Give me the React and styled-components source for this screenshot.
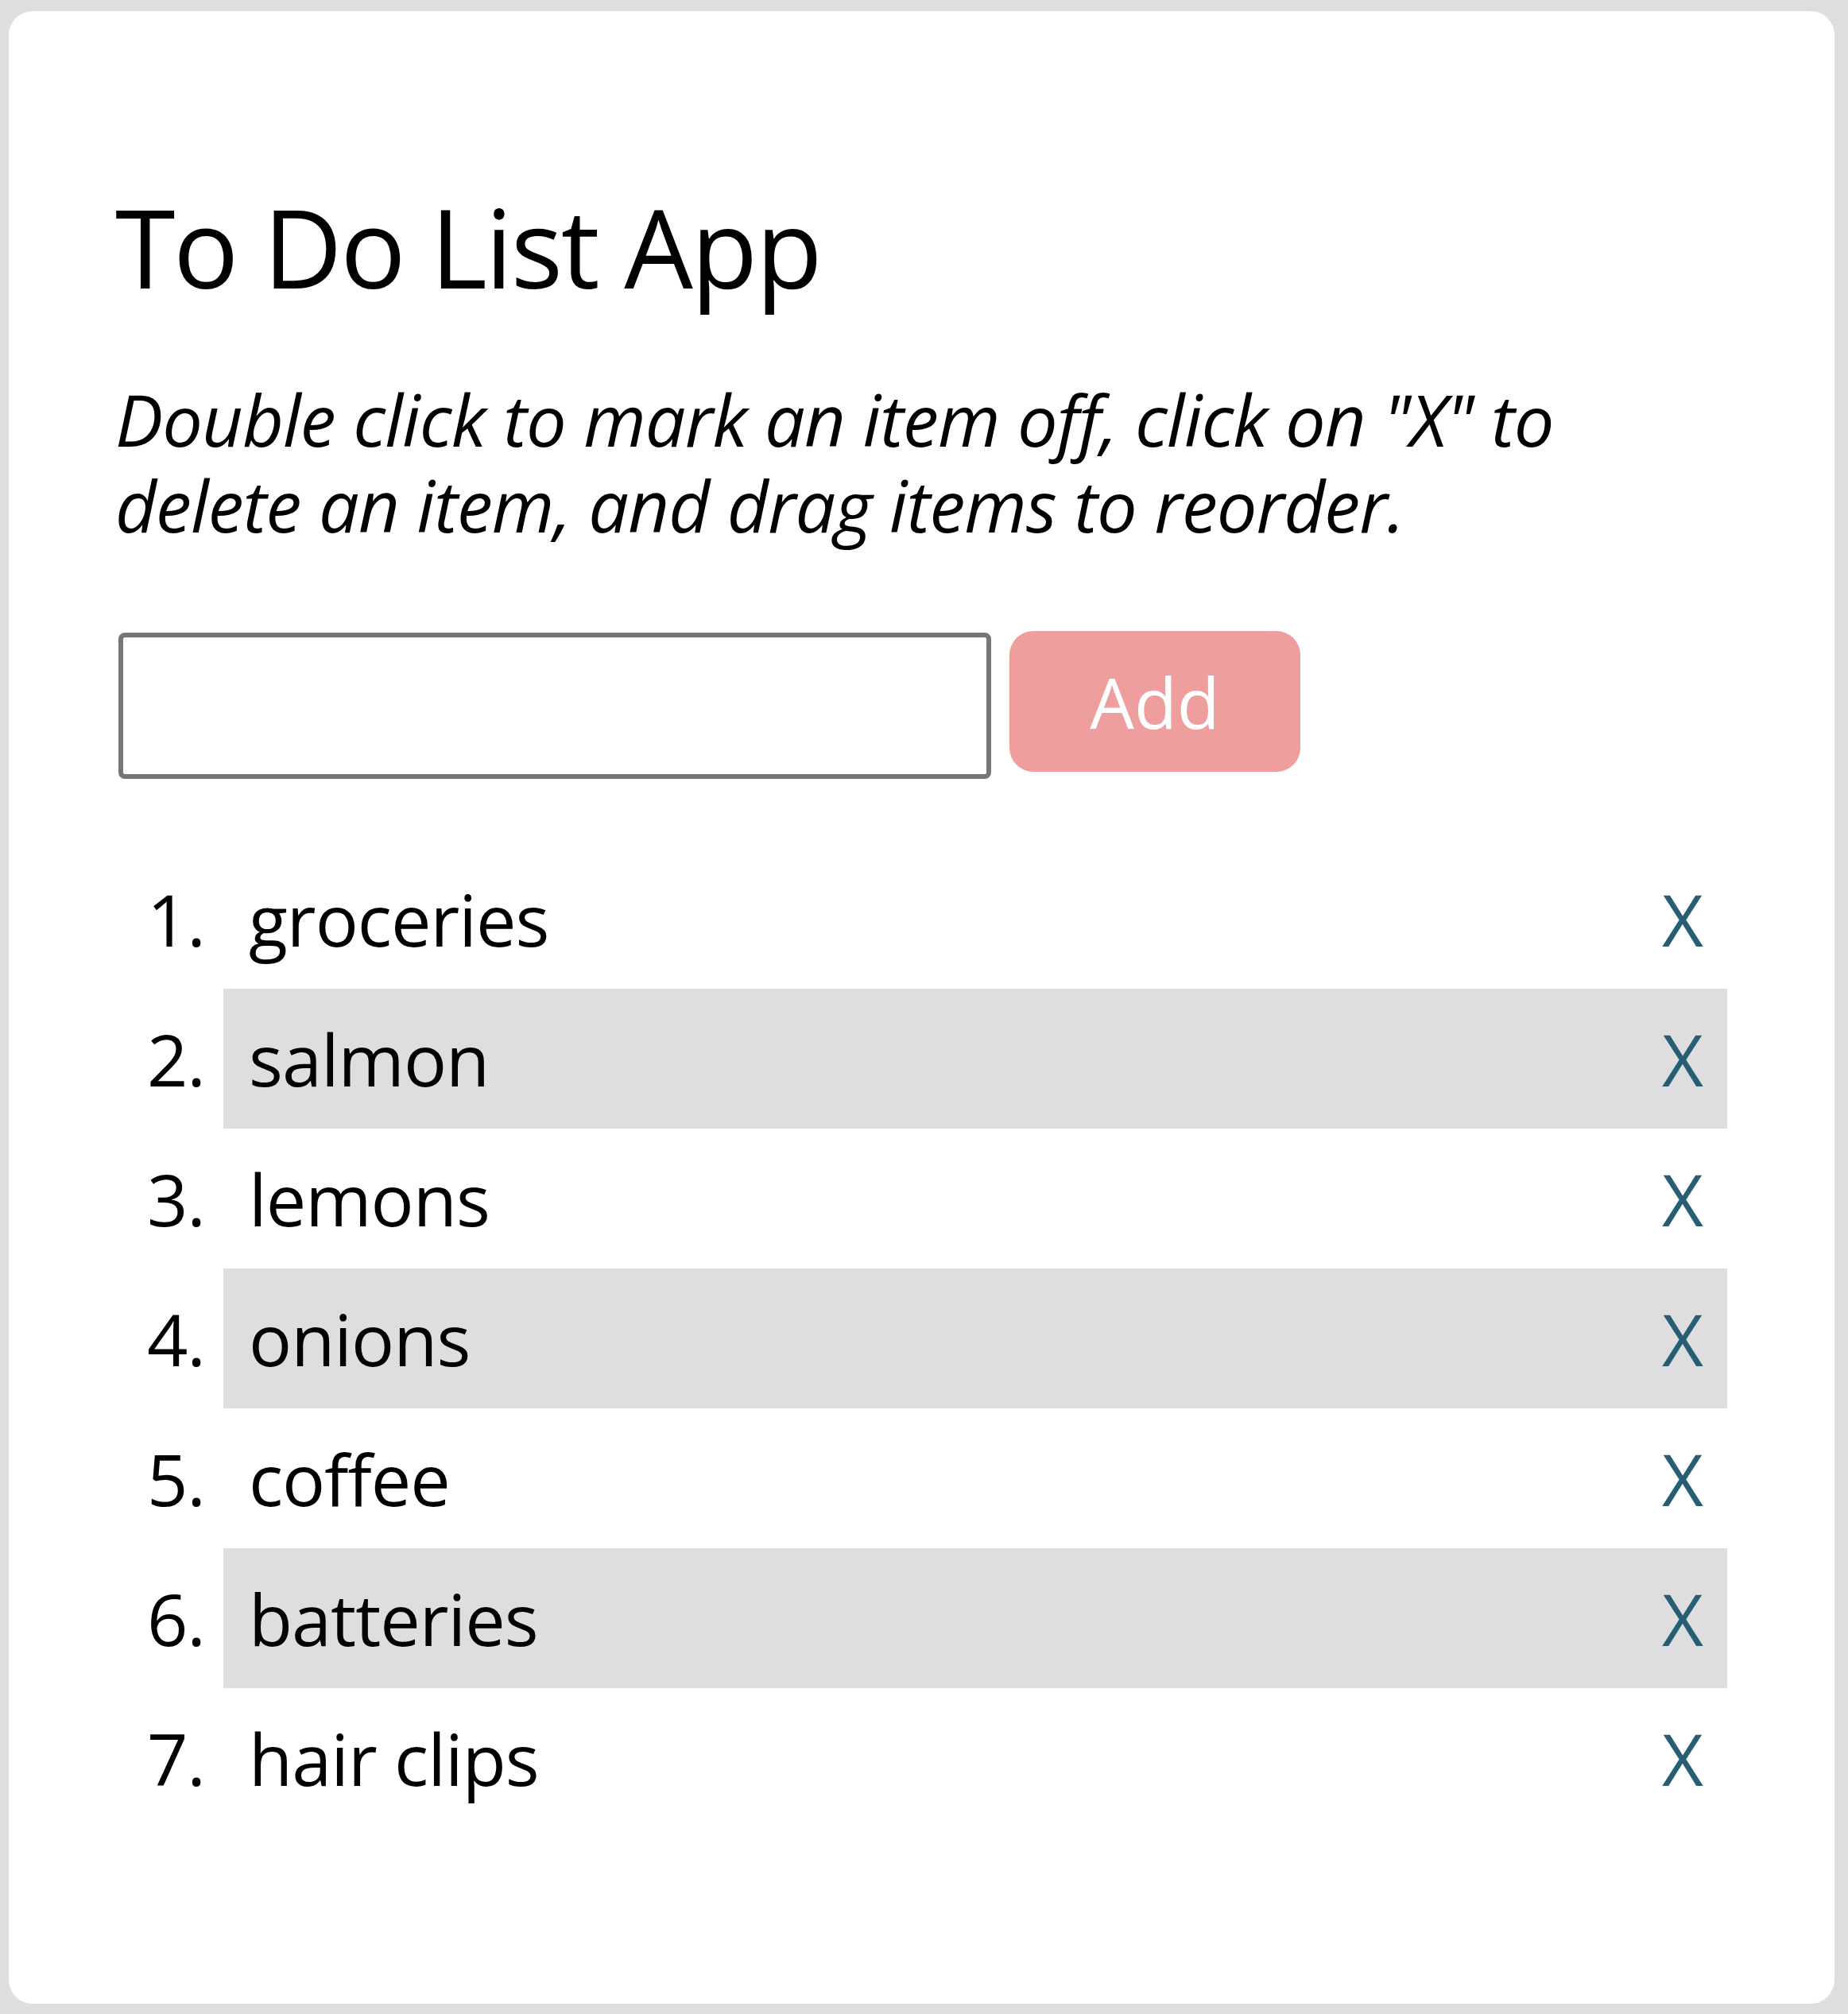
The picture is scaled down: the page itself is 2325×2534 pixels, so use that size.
import React, { useState } from 'react';
import styled, { createGlobalStyle } from 'styled-components';

const initialItems = [
  'groceries',
  'salmon',
  'lemons',
  'onions',
  'coffee',
  'batteries',
  'hair clips',
];

//--------------------------STYLING-------------------------//
const GlobalStyle = createGlobalStyle`
  body {
    margin: 0;
    background-color: #dedede;
    font-family: "Open Sans", "Noto Sans", sans-serif;
    color: #000;
  }
`;

const Page = styled.div`
  padding: 14px 17px 14px 11px;
`;

const Card = styled.div`
  box-sizing: border-box;
  width: 2297px;
  background-color: #fff;
  border-radius: 30px;
  padding: 203px 135px 221px 134px;
`;

const Title = styled.h1`
  margin: 0;
  font-size: 137px;
  font-weight: 400;
  line-height: normal;
  letter-spacing: -2.4px;
`;

const Hint = styled.p`
  margin: 70px 0 0;
  font-size: 90px;
  font-style: italic;
  line-height: 108px;
  letter-spacing: -0.9px;
`;

const AddRow = styled.form`
  display: flex;
  align-items: flex-start;
  gap: 23px;
  margin-top: 105px;
`;

const TextInput = styled.input`
  box-sizing: border-box;
  width: 1098px;
  height: 184px;
  margin: 2px 0 0 4px;
  border: 6px solid #767676;
  border-radius: 8px;
  font-family: inherit;
  font-size: 90px;
  padding: 0 20px;
  outline: none;
`;

const AddButton = styled.button`
  width: 366px;
  height: 177px;
  border: none;
  border-radius: 30px;
  background-color: #ef9e9e;
  color: #fff;
  font-family: inherit;
  font-size: 88px;
  cursor: pointer;
`;

const List = styled.ol`
  list-style: none;
  margin: 88px 0 0;
  padding: 0;
`;

const ListRow = styled.li`
  display: flex;
  align-items: stretch;
  font-size: 90px;
  line-height: normal;
  letter-spacing: -1px;
`;

const Num = styled.span`
  box-sizing: border-box;
  width: 136px;
  flex-shrink: 0;
  padding: 27px 23px 27px 0;
  text-align: right;
`;

const Item = styled.div`
  flex: 1;
  display: flex;
  justify-content: space-between;
  padding: 27px 31px 27px 32px;
  background-color: ${props => (props.striped ? '#dedede' : 'transparent')};
  text-decoration: ${props => (props.done ? 'line-through' : 'none')};
  user-select: none;
`;

const Remove = styled.span`
  color: #275e73;
  cursor: pointer;
`;

//----------------------------- APP --------------------------------//

const App = () => {
  const [items, setItems] = useState(initialItems.map(text => ({ text, done: false })));
  const [value, setValue] = useState('');

  const submitHandler = evt => {
    evt.preventDefault();
    if (!value.trim()) return;
    setItems([...items, { text: value.trim(), done: false }]);
    setValue('');
  };

  const toggle = idx => {
    setItems(items.map((it, i) => (i === idx ? { ...it, done: !it.done } : it)));
  };

  const remove = idx => {
    setItems(items.filter((_, i) => i !== idx));
  };

  return (
    <Page>
      <GlobalStyle />
      <Card>
        <Title>To Do List App</Title>
        <Hint>
          Double click to mark an item off, click on "X" to delete an item, and drag items to reorder.
        </Hint>

        <AddRow onSubmit={submitHandler}>
          <TextInput type="text" value={value} onChange={e => setValue(e.target.value)} />
          <AddButton type="submit">Add</AddButton>
        </AddRow>

        <List>
          {items.map((it, i) => (
            <ListRow key={it.text + i}>
              <Num>{i + 1}.</Num>
              <Item striped={i % 2 === 1} done={it.done} onDoubleClick={() => toggle(i)}>
                <span>{it.text}</span>
                <Remove onClick={() => remove(i)}>X</Remove>
              </Item>
            </ListRow>
          ))}
        </List>
      </Card>
    </Page>
  );
};

export default App;
